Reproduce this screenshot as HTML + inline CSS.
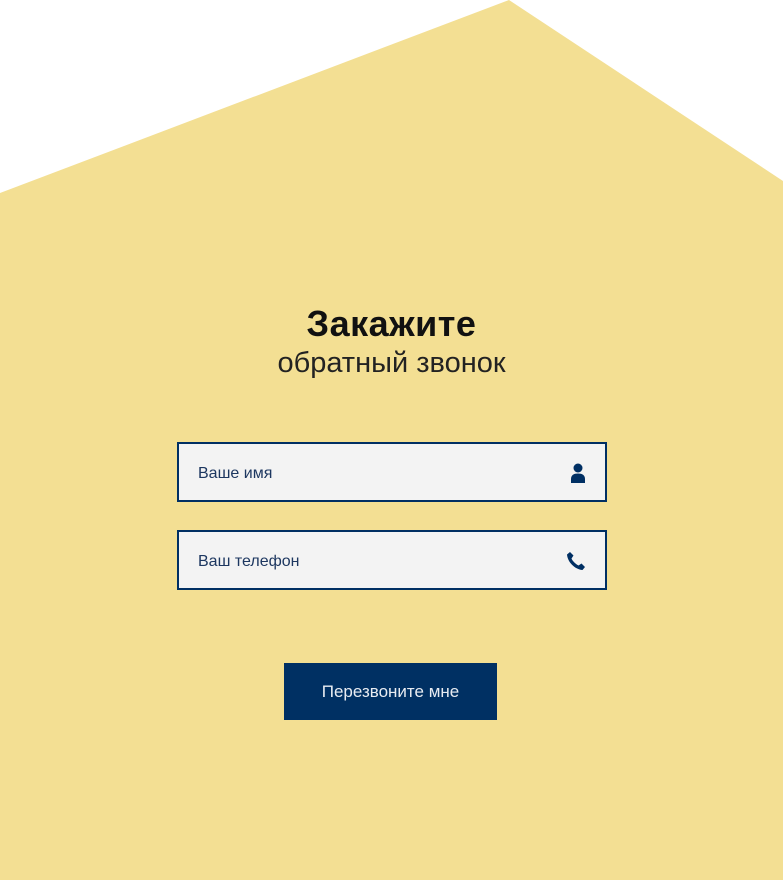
<!DOCTYPE html><html><head><meta charset="utf-8"><style>
body{margin:0;width:783px;height:880px;position:relative;overflow:hidden;background:#fff;font-family:"Liberation Sans","DejaVu Sans",sans-serif}
svg.bg{position:absolute;left:0;top:0}
.t1{position:absolute;left:0;width:783px;top:303px;text-align:center;font-size:36px;font-weight:bold;color:#111;letter-spacing:0.5px}
.t2{position:absolute;left:0;width:783px;top:347px;text-align:center;font-size:29px;color:#222;font-weight:300}
.in{position:absolute;left:177px;width:426px;height:56px;border:2px solid #002f63;background:#f3f3f3;box-sizing:content-box}
.in span{position:absolute;left:19px;top:21px;font-size:16px;color:#1d3760}
.in svg{position:absolute;right:19px;top:19px}
.btn{position:absolute;left:284px;top:663px;width:213px;height:57px;background:#003063;color:#e8ecf2;font-size:17px;text-align:center;line-height:57px}
</style></head><body>
<svg class="bg" width="783" height="880"><polygon points="0,193 509,0 783,181 783,880 0,880" fill="#f3df93"/></svg>
<div class="t1">Закажите</div>
<div class="t2">обратный звонок</div>
<div class="in" style="top:442px"><span>Ваше имя</span><svg width="16" height="20" viewBox="0 0 16 20"><circle cx="8" cy="5" r="4.5" fill="#002f63"/><path d="M1 20V16C1 12 4 10.5 8 10.5S15 12 15 16V20Z" fill="#002f63"/></svg></div>
<div class="in" style="top:530px"><span>Ваш телефон</span><svg width="20" height="20" viewBox="0 0 20 20"><path d="M4 1L7.5 4.5 5.5 7.5C6.5 10 9.5 13 12.5 14.5L15.5 12.5 19 16 16.5 19C9 18.5 1.5 11 1 3.5Z" fill="#002f63"/></svg></div>
<div class="btn">Перезвоните мне</div>
</body></html>
